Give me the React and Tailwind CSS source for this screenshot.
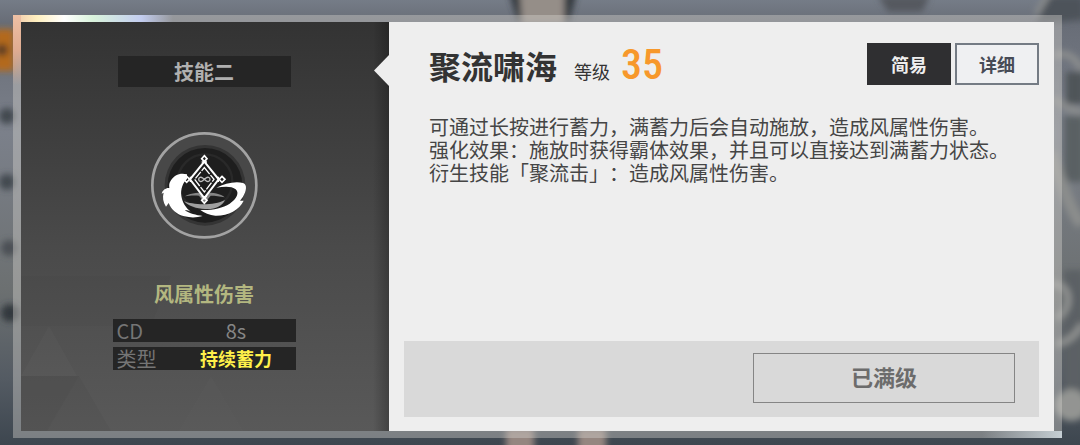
import React, { useState } from "react";

const skill = {
  slot: "技能二",
  name: "聚流啸海",
  level: 35,
  element: "风属性伤害",
  stats: [
    { label: "CD", value: "8s", style: "text-[20px] text-[#858585]" },
    { label: "类型", value: "持续蓄力", style: "text-[18px] font-bold text-[#fff04a]" },
  ],
  description: [
    "可通过长按进行蓄力，满蓄力后会自动施放，造成风属性伤害。",
    "强化效果：施放时获得霸体效果，并且可以直接达到满蓄力状态。",
    "衍生技能「聚流击」：造成风属性伤害。",
  ].join("\n"),
};

const modes = [
  { id: "simple", label: "简易" },
  { id: "detail", label: "详细" },
];

/* Blurred scene behind the dialog */
const Backdrop = () => (
  <svg
    className="absolute inset-0 h-full w-full"
    viewBox="0 0 1080 445"
    preserveAspectRatio="none"
    aria-hidden="true"
  >
    <defs>
      <linearGradient id="sky" x1="0" y1="0" x2="0" y2="1">
        <stop offset="0" stopColor="#757c87" />
        <stop offset="0.05" stopColor="#686d77" />
        <stop offset="0.3" stopColor="#7b808a" />
        <stop offset="0.65" stopColor="#6c7071" />
        <stop offset="0.85" stopColor="#545b63" />
        <stop offset="1" stopColor="#3d464f" />
      </linearGradient>
      <filter id="soft" x="-50%" y="-50%" width="200%" height="200%">
        <feGaussianBlur stdDeviation="3" />
      </filter>
    </defs>
    <rect width="1080" height="445" fill="url(#sky)" />
    <g filter="url(#soft)">
      <rect x="-6" y="29" width="20" height="42" fill="#b3691f" />
      <circle cx="2" cy="50" r="6" fill="#593c22" />
      <circle cx="7" cy="116" r="8" fill="#42484f" />
      <circle cx="7" cy="182" r="8" fill="#42484f" />
      <circle cx="9" cy="248" r="8" fill="#4b5054" />
      <circle cx="10" cy="313" r="9" fill="#33383c" />
      <path d="M509-6h68l-8 28h-51z" fill="#363a41" />
      <path d="M520-6h44v30h-42z" fill="#958e88" />
      <rect x="506" y="428" width="28" height="24" fill="#958680" />
      <rect x="578" y="428" width="28" height="24" fill="#958680" />
      <path d="M878-4h52l-8 16h-34z" fill="#54595e" />
      <path d="M1048-4h36v24l-48 4z" fill="#4e535a" />
      <path d="M1036 14l14-22" stroke="#888b8c" strokeWidth="6" />
      <path d="M1066 72h18v32h-18z" fill="#4f5559" />
      <path d="M1054 56c12-6 22 2 28 14M1054 98c10 10 18 12 28 14" fill="none" stroke="#8b8d8d" strokeWidth="7" />
      <path d="M1064 116h20v66h-20z" fill="#5a6064" />
      <path d="M1050 152c14 38 22 62 32 72" fill="none" stroke="#8b8d8c" strokeWidth="12" />
      <path d="M1064 270h20v150h-20z" fill="#5b6165" />
      <path d="M1050 284c24-2 22 28 6 34M1056 344c12-2 20-8 26-20" fill="none" stroke="#8e908f" strokeWidth="7" />
      <circle cx="1071" cy="405" r="16" fill="#939492" />
    </g>
  </svg>
);

const SkillIcon = () => (
  <svg className="size-[107px]" viewBox="34 23 321 321" role="img" aria-label="聚流啸海">
    <circle cx="194" cy="183" r="156" fill="#484848" stroke="#a3a3a3" strokeWidth="8" />
    <circle cx="196" cy="183" r="121" fill="#343434" />
    <circle cx="196" cy="183" r="112" fill="#1e1e1e" />
    <circle cx="196" cy="172" r="82" fill="none" stroke="#292929" strokeWidth="7" />

    {/* ripples */}
    <path d="M136 216c18-13 96-18 119 3-14-3-28-5-42-5l-18 22-17-22c-18-1-30 0-42 2z" fill="#858585" />
    <path d="M133 231c24 10 88 15 123-4-10 20-31 29-60 27-25-1-49-8-63-23z" fill="#a0a0a0" />

    {/* waves */}
    <path
      d="M142 150c-20-6-39 2-48 18-6 8-6 15-5 23-11-1-20 6-23 17l6-3c-4 14-2 28 7 42l8-11c8 21 25 34 47 40 20 5 38 4 55-1-19-2-41-8-54-17 8 0 13 1 18 4-15-12-25-28-28-47-3-20 5-41 17-51z"
      fill="#fff"
    />
    <path
      d="M230 190c25-13 57-20 80-14 14 4 10 25 0 41l-9 12h11c-13 28-48 46-85 45-17-1-34-8-45-17 32 2 66-5 88-19 21-13 30-33 18-43-11-10-34-9-58-5z"
      fill="#fff"
    />

    {/* diamond emblem */}
    <g fill="none" stroke="#fff">
      <path d="M194 112l43 53-43 56-43-56z" fill="#1c1c1c" strokeWidth="6" />
      <path d="M194 130l29 35-29 38-29-38z" strokeWidth="4" strokeDasharray="25 4" />
      <g strokeWidth="5">
        <path d="M194 94l8 9-8 9-8-9z" />
        <path d="M194 220l8 8-8 9-8-9z" />
        <path d="M141 156l9 9-9 9-9-9z" />
        <path d="M247 156l9 9-9 9-9-9z" />
      </g>
      <path d="M186 113h16M186 217h16M152 157v16M236 157v16" strokeWidth="4" />
      <path d="M189 161c-5-4-12-3-12 4s7 8 12 4l10-8c5-4 12-3 12 4s-7 8-12 4z" stroke="#bdbdbd" strokeWidth="4" />
    </g>
  </svg>
);

const SkillSummary = () => (
  <aside className="relative flex w-[368px] shrink-0 flex-col items-center bg-linear-to-b from-[#333333] via-[#4a4a4a] via-55% to-[#595959] pt-[34px] pr-[2px]">
    {/* faint triangle pattern */}
    <svg className="absolute inset-0 h-full w-full" viewBox="0 0 368 409" preserveAspectRatio="none" aria-hidden="true">
      <path d="M0 254h150l-20 50H0z" fill="#000" opacity="0.02" />
      <path d="M0 354h58l-32 55H0z" fill="#000" opacity="0.06" />
      <path d="M28 304l28 50H0z" fill="#fff" opacity="0.02" />
      <path d="M58 354l32 55H26z" fill="#000" opacity="0.03" />
      <path d="M190 354l32 55h-64z" fill="#fff" opacity="0.01" />
    </svg>
    <div className="absolute inset-y-0 right-0 w-4 bg-linear-to-r from-transparent to-black/25" />

    <div className="relative flex h-[31px] w-[173px] items-center justify-center bg-[#252525] text-[20px] font-bold text-[#b0b0b0]">
      {skill.slot}
    </div>
    <div className="relative mt-[45px]">
      <SkillIcon />
    </div>
    <div className="relative mt-[40px] text-[20px] leading-[30px] font-bold text-[#b3b780]">{skill.element}</div>

    <dl className="relative mt-[10px] flex w-[183px] flex-col gap-[5px]">
      {skill.stats.map((s) => (
        <div key={s.label} className="flex h-[23px] items-center bg-[#252525] pl-1">
          <dt className="w-[60px] text-[20px] leading-[23px] text-[#757575]">{s.label}</dt>
          <dd className={`flex-1 text-center leading-[23px] ${s.style}`}>{s.value}</dd>
        </div>
      ))}
    </dl>

    {/* pointer from the detail pane */}
    <div className="absolute top-[33px] right-0 h-[31px] w-[15px] bg-[#eeeeee] [clip-path:polygon(100%_0,100%_100%,0_50%)]" />
  </aside>
);

const SkillDetail = () => {
  const [mode, setMode] = useState("simple");

  return (
    <section className="flex min-w-0 flex-1 flex-col bg-[#eeeeee] px-[15px] pt-[21px] pb-[14px]">
      <header className="flex h-[46px] items-start justify-between pl-[25px]">
        <div className="flex items-baseline text-[#333333]">
          <h1 className="text-[32px] leading-[44px] font-bold">{skill.name}</h1>
          <span className="ml-[17px] text-[18px]">等级</span>
          <span className="ml-[11px] font-['Roboto_Condensed',Roboto,sans-serif] text-[42px] leading-[44px] font-medium text-[#f7982b]">
            {skill.level}
          </span>
        </div>
        <div className="flex gap-1">
          {modes.map((m) => (
            <button
              key={m.id}
              type="button"
              aria-pressed={mode === m.id}
              onClick={() => setMode(m.id)}
              className={`h-[42px] w-[84px] border-2 text-[18px] font-bold ${
                mode === m.id
                  ? "border-[#2f2f31] bg-[#2f2f31] text-[#eeeeee]"
                  : "border-[#747b84] bg-[#eff0f2] text-[#474b56]"
              }`}
            >
              {m.label}
            </button>
          ))}
        </div>
      </header>

      <p className="mt-[26px] pl-[25px] text-[20px] leading-[23px] whitespace-pre-line text-[#454545] [text-spacing-trim:space-all]">
        {skill.description}
      </p>

      <footer className="mt-auto flex justify-end bg-[#d9d9d9] pt-3 pr-6 pb-[14px]">
        <button type="button" className="h-[50px] w-[262px] border border-[#858585] pb-1 text-[22px] font-bold text-[#6c6c6c]">
          已满级
        </button>
      </footer>
    </section>
  );
};

const App = () => (
  <main className="relative flex min-h-screen overflow-hidden bg-[#60666e] pt-[15px] pr-[18px] pb-[7px] pl-[13px] font-['Noto_Sans_CJK_SC',sans-serif]">
    <Backdrop />
    <div className="relative flex flex-1 bg-[#d8d4d0]/40 px-2 py-[7px]">
      {/* light glints on the frame */}
      <div className="absolute top-0 left-0 h-[7px] w-[160px] bg-[linear-gradient(to_right,#efc6aa,#fff0c0_15%,#ffffff_32%,#d9f3dc_50%,#c3cdf0_80%,transparent)]" />
      <div className="absolute top-0 left-0 h-[70px] w-2 bg-linear-to-b from-[#eec0a4] via-[#dfac92] via-50% to-transparent" />
      <div className="absolute right-0 bottom-0 h-[7px] w-[80px] bg-linear-to-l from-[#c6cfd4] to-transparent" />
      <SkillSummary />
      <SkillDetail />
    </div>
  </main>
);

export default App;
